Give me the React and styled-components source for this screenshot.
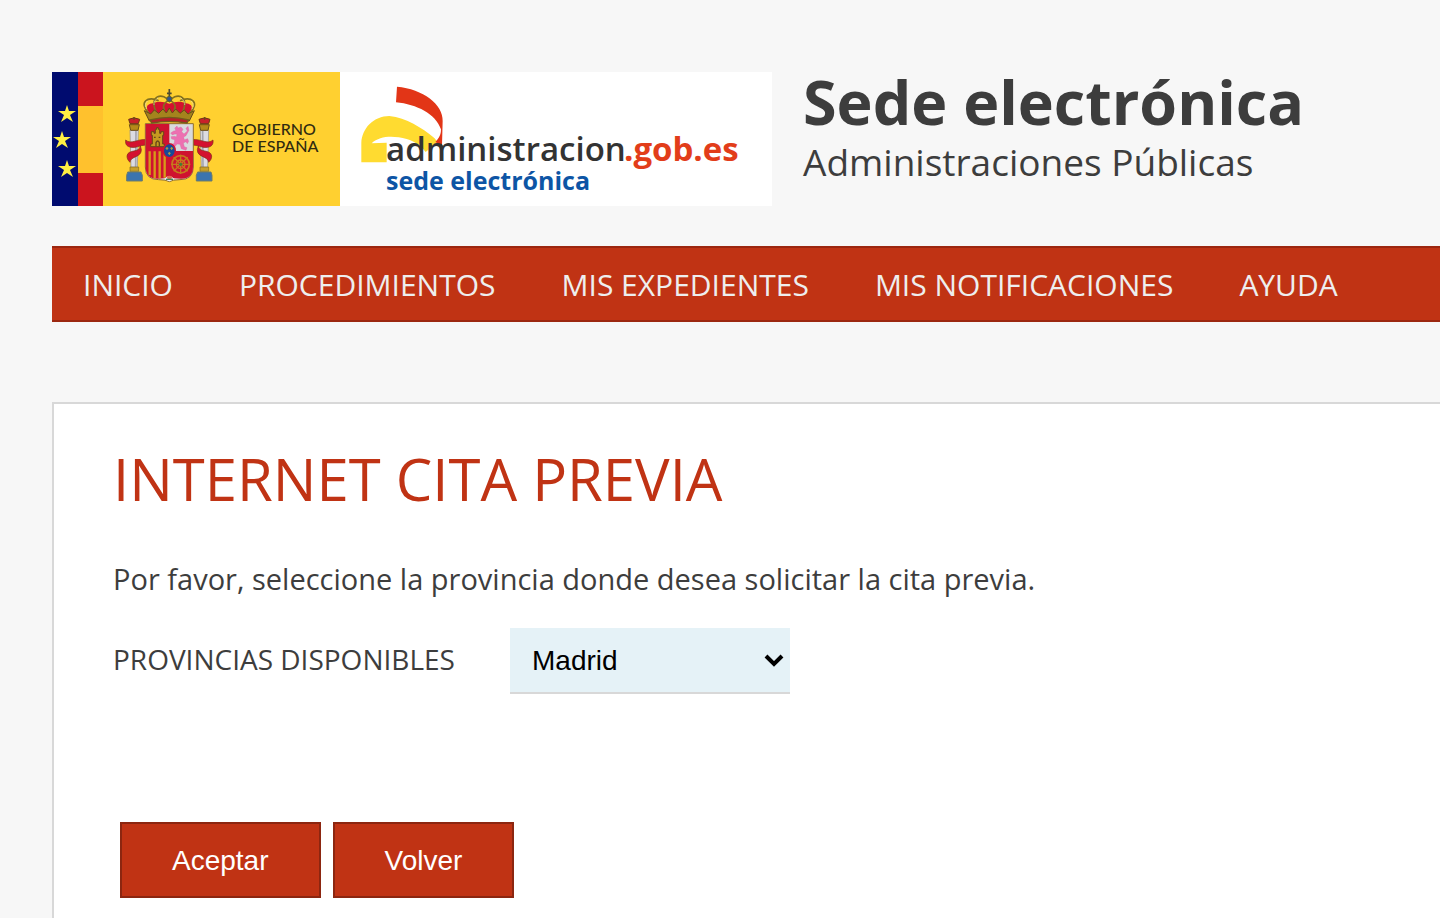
// App.jsx
import React, { useState } from "react";
import styled, { createGlobalStyle } from "styled-components";

const GlobalStyle = createGlobalStyle`
  * {
    box-sizing: border-box;
  }

  body {
    margin: 0;
    background-color: #f7f7f7;
    color: #3d3d3d;
    font-family: "Open Sans", "Noto Sans", sans-serif;
  }
`;

const PageContainer = styled.div`
  display: flex;
  flex-direction: column;
  min-height: 100vh;
  padding: 72px 0 0 52px;
  overflow: hidden;
`;

const Header = styled.header`
  display: flex;
  gap: 31px;
  margin-bottom: 40px;
`;

const Logo = styled.svg`
  display: block;
  flex: none;
  width: 720px;
  height: 134px;
`;

const Title = styled.h1`
  margin: 0;
  font-size: 61px;
  line-height: 60px;
  font-weight: 700;
  white-space: nowrap;
`;

const Subtitle = styled.p`
  margin: 0;
  font-size: 37px;
  line-height: 60px;
  white-space: nowrap;
`;

const Nav = styled.nav`
  display: flex;
  align-items: center;
  gap: 66px;
  height: 76px;
  padding: 2px 31px 0;
  margin-bottom: 80px;
  background-color: #c03314;
  border-top: 2px solid #9c2710;
  border-bottom: 2px solid #9c2710;
`;

const NavLink = styled.a`
  color: #eeeeee;
  font-size: 30px;
  line-height: 40px;
  text-decoration: none;
  white-space: nowrap;
`;

const Panel = styled.main`
  flex: 1;
  padding: 40px 60px 20px 59px;
  background-color: #ffffff;
  border-top: 2px solid #d8d8d8;
  border-left: 2px solid #d8d8d8;
`;

const PanelTitle = styled.h2`
  margin: 0 0 50px;
  color: #c03314;
  font-size: 58px;
  line-height: 70px;
  font-weight: 400;
`;

const Text = styled.p`
  margin: 0 0 34px;
  font-size: 29px;
  line-height: 30px;
`;

const Field = styled.div`
  display: grid;
  grid-template-columns: 345px 280px;
  align-items: center;
  gap: 52px;
  margin-bottom: 128px;
`;

const Label = styled.label`
  padding-bottom: 4px;
  font-size: 28px;
  line-height: 40px;
  white-space: nowrap;
`;

const SelectBox = styled.div`
  position: relative;
`;

const Select = styled.select`
  display: block;
  width: 100%;
  height: 66px;
  padding: 0 22px;
  appearance: none;
  color: #000000;
  background-color: #e5f2f7;
  border: 0;
  border-bottom: 2px solid #d8d8d8;
  border-radius: 0;
  font-family: "Liberation Sans", Arial, sans-serif;
  font-size: 28px;
`;

const Chevron = styled.svg`
  position: absolute;
  top: 26px;
  right: 6px;
  width: 20px;
  height: 14px;
  pointer-events: none;
`;

const Buttons = styled.div`
  display: flex;
  gap: 12px;
  padding-left: 7px;
`;

const Button = styled.button`
  height: 76px;
  padding: 2px 50px 0;
  color: #ffffff;
  background-color: #c03314;
  border: 2px solid #8c2610;
  font-family: "Liberation Sans", Arial, sans-serif;
  font-size: 28px;
  cursor: pointer;
`;

const menu = ["INICIO", "PROCEDIMIENTOS", "MIS EXPEDIENTES", "MIS NOTIFICACIONES", "AYUDA"];
const provinces = ["Madrid", "Barcelona", "Sevilla", "Valencia"];
const stars = [[15, 42], [10, 68], [15, 97]];

const Pillar = () => (
  <g>
    <path d="M60 150h25l-3 112H63z" fill="#dcdce2" stroke="#8d8b92" strokeWidth="2" />
    <path d="M78 153l-1 108" stroke="#a5a5ae" strokeWidth="5" />
    <path d="M58 134h30l-4 17H62z" fill="#b58a19" stroke="#6b4e16" strokeWidth="3" />
    <path d="M56 118q16-9 33 0l-4 13H60z" fill="#c9202a" stroke="#6b3a16" strokeWidth="3" />
    <path d="M72 111v9" stroke="#6b4e16" strokeWidth="4" />
    <path d="M60 261h26v13H60z" fill="#c8a02a" stroke="#806620" strokeWidth="2" />
    <path d="M53 276h40l4 10v17H50v-17z" fill="#3c74ae" stroke="#6d7b68" strokeWidth="3" />
    <path d="M108 179C86 175 63 195 47 180c-2 14 5 20 16 22 15 3 25-6 45-7z" fill="#d4112f" stroke="#7d3017" strokeWidth="2" />
    <path d="M91 198c-2 22-37 8-40 30 0 8 3 13 9 19 2-20 34-13 34-38z" fill="#d4112f" stroke="#7d3017" strokeWidth="2" />
  </g>
);

const CoatOfArms = () => (
  <g transform="translate(58 8) scale(0.3333)">
    <Pillar />
    <g transform="translate(356 0) scale(-1 1)">
      <Pillar />
    </g>
    <path d="M106 131h144v130q0 38-40 38-22 0-32 6-10-6-32-6-40 0-40-38z" fill="#d9dade" stroke="#8e6b2b" strokeWidth="3" />
    <path d="M107 132h71v80h-71zM178 213h71v48q0 35-36 35-23 0-35-4zM107 212h71v80q-12 4-35 4-36 0-36-35z" fill="#cf1230" />
    <path d="M119 214v71M134 214v81M149 214v81M164 214v79" stroke="#d79a19" strokeWidth="7" />
    <path d="M122 200v-8h5v-26h-3v-11h8v5h4v-12h4v-5h5v5h4v12h4v-5h8v11h-3v26h5v8z" fill="#c69a20" stroke="#674719" strokeWidth="3" />
    <path d="M138 199v-11q5-10 10 0v11M132 172h5M146 172h5" fill="none" stroke="#674719" strokeWidth="4" />
    <path d="M194 145l7-7 3 6 9-3 6 7-4 7 7 7 10-9-4-8 6-6 3 12-9 16-7 4 2 8 10-3 3 8-4 7-4-6-8 4 3 11 8 3-3 8-14-5-4-13-9-1-7 9-11-2 3-6 7-3 1-11-9-2-2-7 11-1 5 2 2-8-6-1-8 3-5-6 9-6 6-1-1-6z" fill="#ed70b1" stroke="#cf6798" strokeWidth="1" />
    <circle cx="212" cy="253" r="26" fill="none" stroke="#c6791e" strokeWidth="5" />
    <circle cx="212" cy="253" r="13" fill="none" stroke="#c6791e" strokeWidth="4" />
    <path d="M212 224v58M183 253h58M191 232l42 42M233 232l-42 42" stroke="#c6791e" strokeWidth="4" />
    <circle cx="212" cy="253" r="5" fill="#467a38" />
    <path d="M163 297q14-18 30 0l-15 7z" fill="#eeeeee" />
    <path d="M170 291q8-7 17 0l-3 6h-11z" fill="#de6f54" />
    <path d="M168 298h21" stroke="#3d8b62" strokeWidth="4" />
    <ellipse cx="178" cy="212" rx="18" ry="21" fill="#174a98" stroke="#d4112f" strokeWidth="4" />
    <path d="M171 201v9M185 201v9M178 216v9M167 205h8M181 205h8M174 220h8" stroke="#b1a144" strokeWidth="3" />
    <path d="M112 90Q104 72 132 69q18-8 46 2 28-10 46-2 28 3 20 21l-19 29h-94z" fill="#d4112f" />
    <g fill="none" stroke="#83701f" strokeWidth="5">
      <path d="M117 100C83 66 115 46 146 62M239 100c34-34 2-54-29-38" />
      <path d="M139 98c-25-56 23-60 39-34 16-26 64-22 39 34" />
      <path d="M164 91q-12-16 14-32 26 16 14 32" />
    </g>
    <path d="M112 64q-10 10-3 22M144 54q-13 8-12 20M212 54q13 8 12 20M244 64q10 10 3 22" fill="none" stroke="#e4dfb8" strokeWidth="3" strokeDasharray="4 3" />
    <path d="M103 92l19 10 11-12 13 10 13-13 10 12 9-15 9 15 10-12 13 13 13-10 11 12 19-10-15 31q-60-13-120 0z" fill="#a4831d" stroke="#624b18" strokeWidth="3" />
    <path d="M120 120q58-16 116 0l-5 9q-53-9-106 0z" fill="#b71e2a" stroke="#735a1c" strokeWidth="4" />
    <path d="M178 27v39M171 40h14" stroke="#504c2f" strokeWidth="5" />
    <circle cx="178" cy="57" r="8" fill="#31558e" stroke="#6b641d" strokeWidth="3" />
  </g>
);

const GovernmentLogo = () => (
  <Logo viewBox="0 0 720 134" role="img" aria-label="Gobierno de España, administracion.gob.es, sede electrónica">
    <rect width="720" height="134" fill="#ffffff" />
    <rect width="288" height="134" fill="#ffd030" />
    <rect width="26" height="134" fill="#000b6f" />
    <rect x="26" width="25" height="134" fill="#cb141e" />
    <rect x="26" y="34" width="25" height="67" fill="#ffc12d" />
    {stars.map(([x, y]) => (
      <path
        key={y}
        transform={`translate(${x} ${y})`}
        d="M0-9 2-3H9L3 1 6 8 0 4-6 8-3 1-9-3H-2Z"
        fill="#fff044"
      />
    ))}
    <CoatOfArms />
    <g fill="#302b10" fontFamily="Lato, sans-serif" fontSize="16" fontWeight="500">
      <text x="180" y="63">GOBIERNO</text>
      <text x="180" y="80">DE ESPAÑA</text>
    </g>
    <g transform="translate(288 -12) scale(0.3333)">
      <path d="M64 307v-59c2-43 37-80 84-80 52 6 96 34 135 66l10 12-36 30c-16-22-38-34-57-39-40-10-80-10-105 13l45-2v59z" fill="#ffdb30" />
      <path d="M171 80c78 7 139 53 137 103l-2 74-20-11c12-12 17-22 17-38-16-46-72-75-135-81z" fill="#e23517" />
    </g>
    <g fontFamily="Open Sans, sans-serif" fontWeight="600">
      <text x="334" y="89" fontSize="33" fill="#333333">administracion</text>
      <text x="572" y="89" fontSize="33" fontWeight="700" fill="#e23d1a">.gob.es</text>
      <text x="334" y="118" fontSize="25" fontWeight="700" fill="#0d55a5">sede electrónica</text>
    </g>
  </Logo>
);

export const AppointmentPage = () => {
  const [province, setProvince] = useState("Madrid");

  return (
    <PageContainer>
      <Header>
        <GovernmentLogo />
        <div>
          <Title>Sede electrónica</Title>
          <Subtitle>Administraciones Públicas</Subtitle>
        </div>
      </Header>
      <Nav>
        {menu.map((item) => (
          <NavLink key={item} href="#">{item}</NavLink>
        ))}
      </Nav>
      <Panel>
        <PanelTitle>INTERNET CITA PREVIA</PanelTitle>
        <Text>Por favor, seleccione la provincia donde desea solicitar la cita previa.</Text>
        <Field>
          <Label htmlFor="province">PROVINCIAS DISPONIBLES</Label>
          <SelectBox>
            <Select id="province" value={province} onChange={(e) => setProvince(e.target.value)}>
              {provinces.map((name) => (
                <option key={name}>{name}</option>
              ))}
            </Select>
            <Chevron viewBox="0 0 20 14" aria-hidden="true">
              <path d="M2 2l8 8 8-8" fill="none" stroke="#000000" strokeWidth="4" />
            </Chevron>
          </SelectBox>
        </Field>
        <Buttons>
          <Button type="button">Aceptar</Button>
          <Button type="button">Volver</Button>
        </Buttons>
      </Panel>
    </PageContainer>
  );
};

export default function App() {
  return (
    <>
      <GlobalStyle />
      <AppointmentPage />
    </>
  );
}
